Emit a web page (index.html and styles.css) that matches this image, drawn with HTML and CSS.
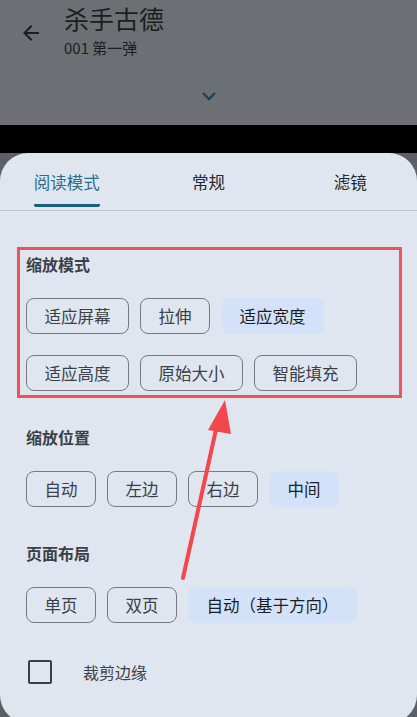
FILE: index.html
```html
<!DOCTYPE html>
<html lang="zh-CN">
<head>
    <meta charset="UTF-8">
    <meta name="viewport" content="width=device-width, initial-scale=1.0">
    <title>阅读设置</title>
    <link rel="stylesheet" href="styles.css">
</head>
<body>

    <header class="topbar">
        <div class="topbar-row">
            <svg class="back" width="24" height="24" viewBox="0 0 24 24">
                <path d="M20 11H7.83l5.59-5.59L12 4l-8 8 8 8 1.41-1.41L7.83 13H20v-2z" fill="#1b1e21"/>
            </svg>
            <div class="titles">
                <div class="title">杀手古德</div>
                <div class="subtitle">001 第一弹</div>
            </div>
        </div>
        <svg class="chevron" width="16" height="10" viewBox="0 0 16 10">
            <path d="M2 2l6 6 6-6" fill="none" stroke="#1b4458" stroke-width="2.4"/>
        </svg>
    </header>

    <div class="band"></div>

    <div class="sheet">
        <nav class="tabs">
            <div class="tab active"><span>阅读模式</span></div>
            <div class="tab"><span>常规</span></div>
            <div class="tab"><span>滤镜</span></div>
        </nav>

        <!-- 红框标注的区域 -->
        <section class="group highlight">
            <h3>缩放模式</h3>
            <div class="chips">
                <span class="chip">适应屏幕</span>
                <span class="chip">拉伸</span>
                <span class="chip selected">适应宽度</span>
                <span class="chip">适应高度</span>
                <span class="chip">原始大小</span>
                <span class="chip">智能填充</span>
            </div>
        </section>

        <section class="group">
            <h3>缩放位置</h3>
            <div class="chips">
                <span class="chip">自动</span>
                <span class="chip">左边</span>
                <span class="chip">右边</span>
                <span class="chip selected">中间</span>
            </div>
        </section>

        <section class="group">
            <h3>页面布局</h3>
            <div class="chips">
                <span class="chip">单页</span>
                <span class="chip">双页</span>
                <span class="chip selected">自动（基于方向）</span>
            </div>
        </section>

        <label class="check-row">
            <span class="checkbox"></span>
            <span>裁剪边缘</span>
        </label>
    </div>

    <!-- 标注箭头 -->
    <svg class="annotation" width="417" height="717" viewBox="0 0 417 717">
        <line x1="183" y1="578" x2="217" y2="425" stroke="#f2474d" stroke-width="4" stroke-linecap="round"/>
        <polygon points="225,400 208,430 231,434" fill="#f2474d"/>
    </svg>

</body>
</html>
```

FILE: styles.css
```css
body {
    margin: 0;
    width: 417px;
    height: 717px;
    overflow: hidden;
    position: relative;
    background-color: #5c6064;
    font-family: "Noto Sans CJK SC", "Noto Sans", sans-serif;
    color: #3b4046;
}
.topbar {
    height: 125px;
    background-color: #6c7075;
    box-sizing: border-box;
    padding-top: 3px;
}
.topbar-row {
    display: flex;
    align-items: flex-start;
}
.back {
    margin: 18px 0 0 19px;
}
.titles {
    margin-left: 21px;
}
.title {
    font-size: 25px;
    line-height: 30px;
    color: #1b1e21;
}
.subtitle {
    font-size: 15px;
    line-height: 20px;
    margin-top: 5px;
    color: #1b1e21;
}
.chevron {
    display: block;
    margin: 33px auto 0;
}
.band {
    height: 28px;
    background-color: #000;
}
.sheet {
    background-color: #dfe6f0;
    border-radius: 28px;
    height: 570px;
}
.tabs {
    display: grid;
    grid-template-columns: 1fr 1fr 1fr;
    margin: 0 -4px;
    height: 57px;
    border-bottom: 1px solid #c1c6cd;
}
.tab {
    display: flex;
    justify-content: center;
    align-items: flex-start;
    padding-top: 18px;
    font-size: 16.5px;
    line-height: 22px;
    color: #24282d;
}
.tab span {
    height: 36px;
    box-sizing: border-box;
}
.tab.active {
    color: #2b6c8c;
}
.tab.active span {
    border-bottom: 3px solid #155f80;
    border-radius: 0 0 2px 2px;
}
.group {
    padding-left: 26px;
    margin-top: 36px;
}
.group h3 {
    margin: 0 0 24px;
    font-size: 16px;
    line-height: 20px;
    font-weight: bold;
    color: #3b4046;
}
.highlight {
    margin: 36px 15px 0 17px;
    border: 3px solid #f0525a;
    padding: 4px 0 4px 6px;
}
.highlight h3 {
    margin-bottom: 24px;
}
.highlight + .group {
    margin-top: 29px;
}
.chips {
    display: flex;
    flex-wrap: wrap;
    gap: 21px 11px;
}
.chip {
    height: 36px;
    box-sizing: border-box;
    padding: 0 17.5px;
    border: 1px solid #767b82;
    border-radius: 8px;
    font-size: 16.5px;
    line-height: 34px;
    color: #3b4046;
}
.chip.selected {
    border-color: transparent;
    background-color: #d3e2f9;
    color: #1a1f26;
}
.check-row {
    display: flex;
    align-items: center;
    margin-top: 37px;
    padding-left: 28px;
    font-size: 16px;
    color: #3b4046;
}
.checkbox {
    width: 24px;
    height: 24px;
    box-sizing: border-box;
    border: 2.5px solid #3b4046;
    border-radius: 2px;
    margin-right: 31px;
}
.annotation {
    position: absolute;
    left: 0;
    top: 0;
    pointer-events: none;
}
```
